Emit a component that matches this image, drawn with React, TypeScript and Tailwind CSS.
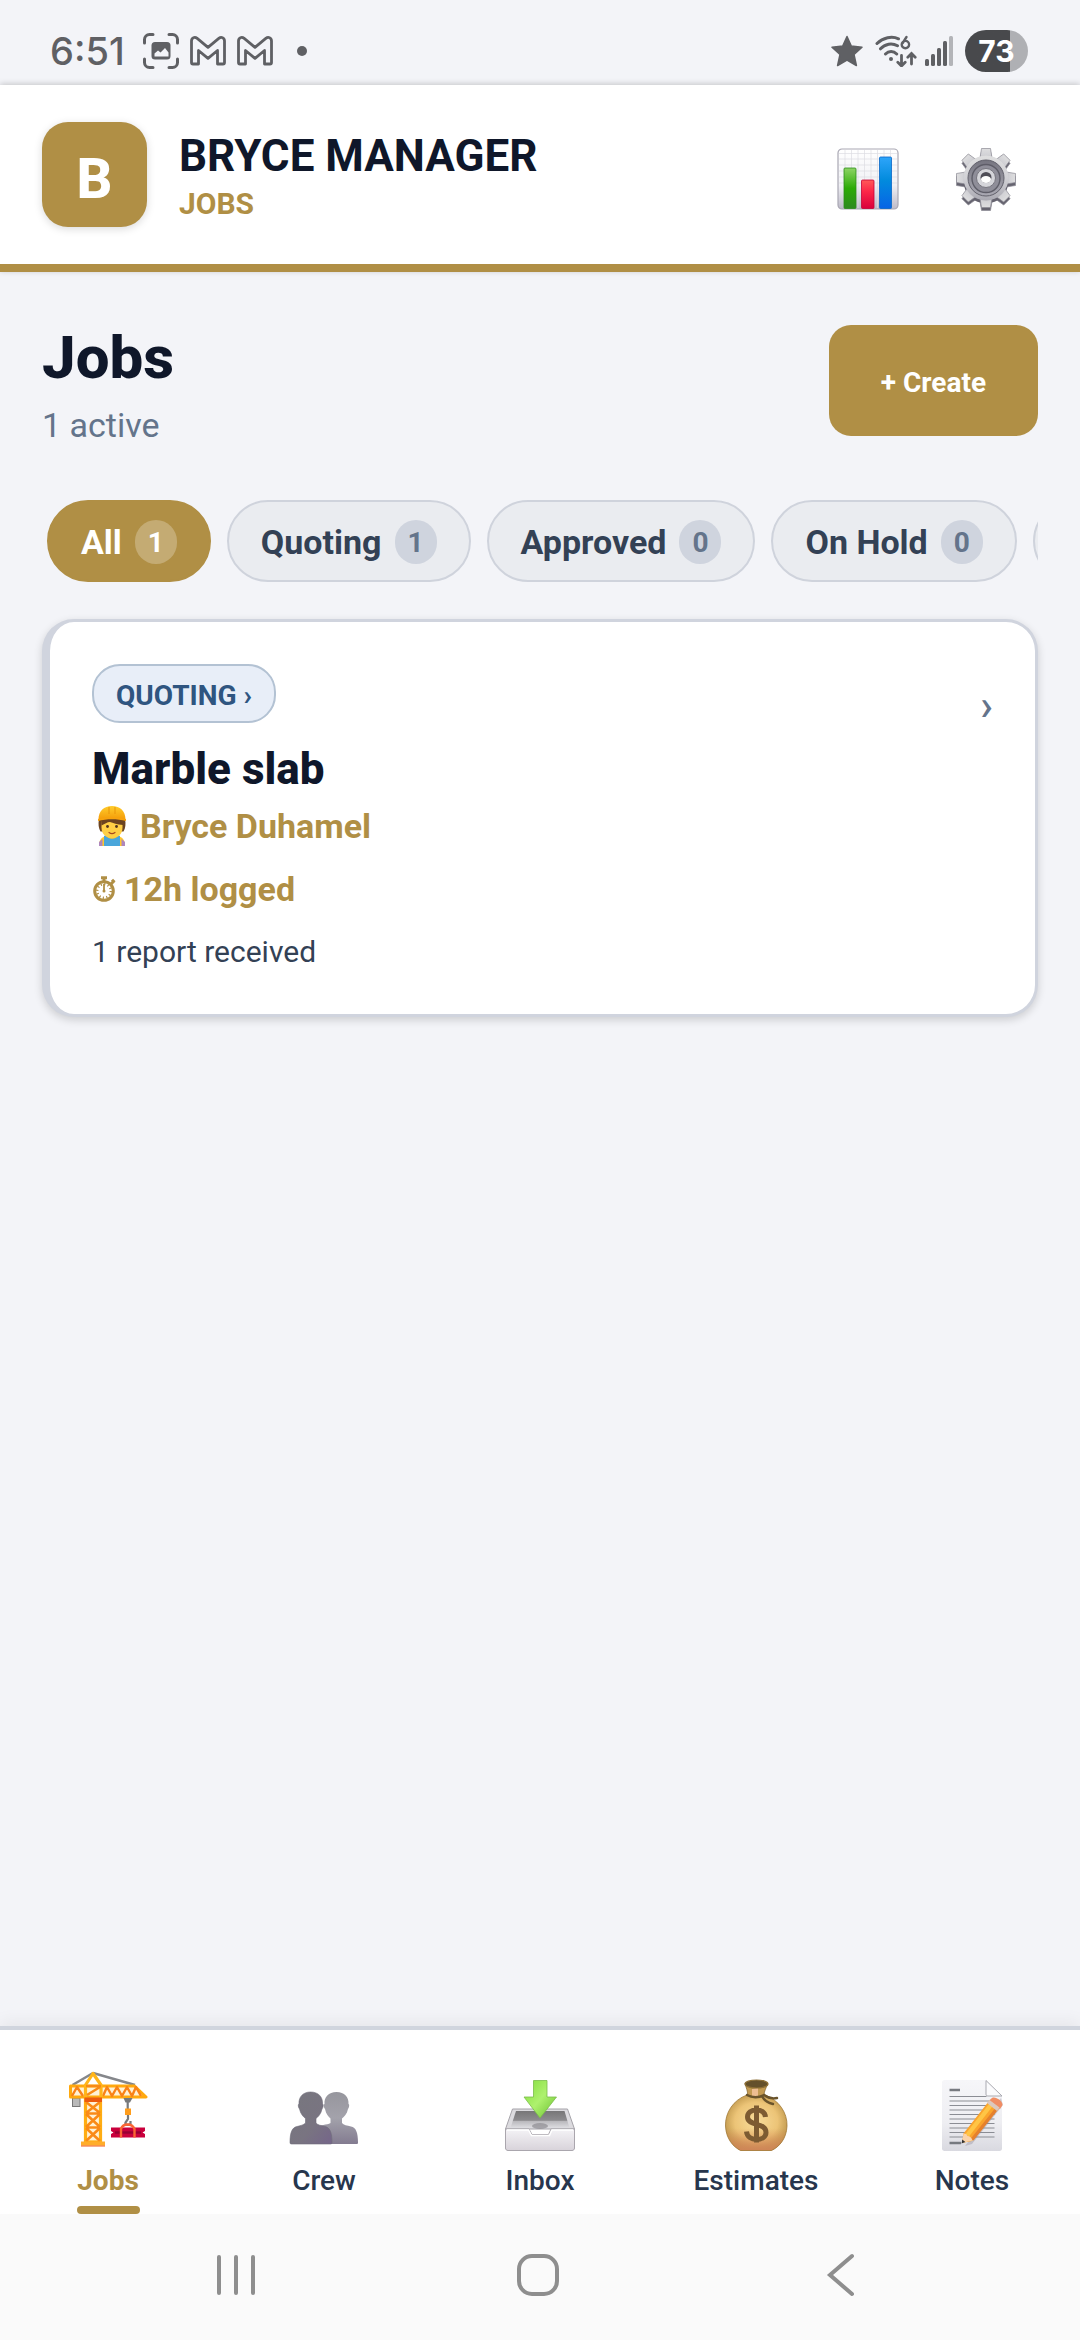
import React from "react";

const filters = [
  { label: "All", count: 1, active: true },
  { label: "Quoting", count: 1, active: false },
  { label: "Approved", count: 0, active: false },
  { label: "On Hold", count: 0, active: false },
];

function CaptureIcon() {
  return (
    <svg className="size-9" viewBox="0 0 36 36" fill="none" aria-hidden="true">
      <path d="M1.5 10V6.5a5 5 0 0 1 5-5H10M26 1.5h3.500a5 5 0 0 1 5 5V10M34.500 26v3.500a5 5 0 0 1-5 5H26M10 34.500H6.500a5 5 0 0 1-5-5V26" stroke="#5f6064" strokeWidth="3" strokeLinecap="round" />
      <rect x="8.500" y="9" width="19" height="17.500" rx="3.500" fill="#5f6064" />
      <path d="M11.500 23.500v-3l3.500-3 2.500 2 4.500-4.500 3.500 4.500v4z" fill="#f3f4f8" />
    </svg>
  );
}

function MailIcon() {
  return (
    <svg className="h-[30px] w-9" viewBox="0 0 36 30" fill="none" stroke="#5f6064" aria-hidden="true">
      <path d="M1.500 26.500V5C1.500 1.500 4.800 .5 7.200 2.400L18 11.300 28.800 2.400C31.200 .5 34.500 1.500 34.500 5v21.500c0 1-.6 1.500-1.500 1.500h-5.500V14.500L18 22.300 8.500 14.500V28H3c-.9 0-1.500-.5-1.500-1.500z" strokeWidth="2.800" strokeLinejoin="round" />
    </svg>
  );
}

function WifiIcon() {
  return (
    <svg className="h-8 w-[42px]" viewBox="0 0 42 32" fill="none" stroke="#5f6064" strokeLinecap="round" aria-hidden="true">
      <path d="M2 8.500C8 2.500 17 .8 23.500 3.800M5.500 13.800C10 8.800 17 7.600 22.500 10.800M10.500 19c3.200-3.200 8-3.200 11.200 0" strokeWidth="3" />
      <circle cx="16" cy="24" r="2" fill="#5f6064" stroke="none" />
      <path d="M31.500 2 27.700 8M26.700 9.600a3.700 3.700 0 1 1 7.400 0 3.700 3.700 0 1 1-7.400 0z" strokeWidth="2.400" />
      <path d="M26.500 20.500V31M22.800 27.300l3.700 3.700 3.700-3.700M36.500 29V18.500M32.800 22.200l3.700-3.700 3.700 3.700" strokeWidth="2.800" />
    </svg>
  );
}

function StatusBar() {
  return (
    <div className="flex h-[85px] items-center justify-between pt-4 pr-[52px] pl-[50px] font-['Inter',sans-serif]">
      <div className="flex items-center">
        <span className="text-[38px] leading-10 font-medium text-[#5f6064]">6:51</span>
        <span className="ml-[18px] flex items-center gap-[11px]">
          <CaptureIcon />
          <MailIcon />
          <MailIcon />
        </span>
        <span className="ml-6 size-[10px] rounded-full bg-[#5f6064]" />
      </div>
      <div className="flex items-center">
        <svg className="size-8" viewBox="0 0 32 32" aria-hidden="true">
          <path d="M16 1.500 20.300 11 31 12.200 23 19.500 25.400 30.500 16 25 6.600 30.500 9 19.500 1 12.200 11.700 11z" fill="#5f6064" stroke="#5f6064" strokeWidth="1.500" strokeLinejoin="round" />
        </svg>
        <span className="ml-3">
          <WifiIcon />
        </span>
        <svg className="ml-2 h-8 w-7" viewBox="0 0 28 32" aria-hidden="true">
          <g fill="#5f6064">
            <rect x="0" y="24" width="4" height="7" rx="1.500" />
            <rect x="6" y="19" width="4" height="12" rx="1.500" />
            <rect x="12" y="13" width="4" height="18" rx="1.500" />
            <rect x="18" y="6" width="4" height="25" rx="1.500" />
          </g>
          <rect x="24" y="1" width="4" height="30" rx="1.500" fill="#b3b4b8" />
        </svg>
        <span className="ml-3 flex h-[42px] w-[63px] items-center justify-center rounded-full bg-linear-to-r from-[#48494c] from-72% to-[#afb0b4] to-72% text-[30px] leading-10 font-bold text-white">
          73
        </span>
      </div>
    </div>
  );
}

function ChartIcon() {
  return (
    <svg className="size-16" viewBox="0 0 64 64" aria-hidden="true">
      <defs>
        <linearGradient id="chart-paper" x1="0" y1="0" x2="0" y2="1">
          <stop offset="0" stopColor="#fff" />
          <stop offset=".6" stopColor="#f1f1f5" />
          <stop offset="1" stopColor="#bdbac8" />
        </linearGradient>
        <linearGradient id="chart-green" x1="0" y1="0" x2="0" y2="1">
          <stop offset="0" stopColor="#8ed465" />
          <stop offset=".5" stopColor="#2cab06" />
          <stop offset="1" stopColor="#2d8a1f" />
        </linearGradient>
        <linearGradient id="chart-red" x1="0" y1="0" x2="0" y2="1">
          <stop offset="0" stopColor="#ff5a58" />
          <stop offset=".4" stopColor="#fc2748" />
          <stop offset="1" stopColor="#d9003c" />
        </linearGradient>
        <linearGradient id="chart-blue" x1="0" y1="0" x2="0" y2="1">
          <stop offset="0" stopColor="#2ea5fa" />
          <stop offset=".45" stopColor="#028bdd" />
          <stop offset="1" stopColor="#0764e6" />
        </linearGradient>
      </defs>
      <rect x="2" y="2" width="60" height="60" rx="4" fill="url(#chart-paper)" stroke="#a9a7b3" strokeWidth="1.200" />
      <path d="M9 3v58M15.500 3v58M22 3v58M28.500 3v58M35 3v58M41.500 3v58M48 3v58M54.500 3v58M3 6.500h58M3 12h58M3 18h58M3 24h58M3 30h58M3 36h58" stroke="#dddce3" strokeWidth=".7" />
      <rect x="8" y="21" width="12" height="40.500" rx="1" fill="url(#chart-green)" stroke="#2b8d1b" strokeWidth=".8" />
      <rect x="25.500" y="33" width="12.500" height="28.500" rx="1" fill="url(#chart-red)" stroke="#c70036" strokeWidth=".8" />
      <rect x="43.500" y="10" width="12" height="51.500" rx="1" fill="url(#chart-blue)" stroke="#0866c6" strokeWidth=".8" />
    </svg>
  );
}

const teeth = [0, 45, 90, 135, 180, 225, 270, 315];

function GearShape({ fill }: { fill: string }) {
  return (
    <g fill={fill} stroke="#8b8993" strokeWidth=".7">
      {teeth.map((angle) => (
        <path key={angle} d="M25.500 14 27.500 1.500h9L38.500 14z" transform={`rotate(${angle} 32 31)`} />
      ))}
      <circle cx="32" cy="31" r="22.500" stroke="none" />
    </g>
  );
}

function GearIcon() {
  return (
    <svg className="size-16" viewBox="0 0 64 64" aria-hidden="true">
      <defs>
        <linearGradient id="gear-face" x1="0" y1="0" x2="0" y2="1">
          <stop offset="0" stopColor="#dededf" />
          <stop offset=".5" stopColor="#d2d2d6" />
          <stop offset="1" stopColor="#a9a8b1" />
        </linearGradient>
        <linearGradient id="gear-ring" x1="0" y1="0" x2="0" y2="1">
          <stop offset="0" stopColor="#75747f" />
          <stop offset="1" stopColor="#aaa9b3" />
        </linearGradient>
      </defs>
      <g transform="translate(0 3)">
        <GearShape fill="#65636f" />
      </g>
      <GearShape fill="url(#gear-face)" />
      <circle cx="32" cy="31" r="18" fill="url(#gear-ring)" stroke="#62616c" />
      <circle cx="32" cy="31.500" r="14" fill="#8f8e99" stroke="#5e5d68" strokeWidth="1.400" />
      <circle cx="32" cy="31" r="9.500" fill="#d5d5da" stroke="#77767f" />
      <circle cx="32" cy="30.500" r="5.500" fill="#4f4e57" />
      <ellipse cx="32" cy="32.500" rx="5" ry="3.400" fill="#fff" />
    </svg>
  );
}

function WorkerIcon() {
  return (
    <svg className="h-10 w-10" viewBox="0 0 40 40" aria-hidden="true">
      <defs>
        <linearGradient id="helmet" x1="0" y1="0" x2="0" y2="1">
          <stop offset="0" stopColor="#ffcd2c" />
          <stop offset="1" stopColor="#f49b08" />
        </linearGradient>
      </defs>
      <path d="M7 13c-1 5-.5 9 1.500 12.500h23C33.500 22 34 18 33 13z" fill="#6b4320" />
      <path d="M7 40c0-6 2.500-9 7-10h12c4.500 1 7 4 7 10z" fill="#ffc72e" />
      <path d="M7 40v-4l3.500-3v7zM33 40v-4l-3.500-3v7z" fill="#ae87bd" />
      <path d="M14 29c1 5 11 5 12 0l2 1v10H12V30z" fill="#4aa6db" />
      <path d="M9.500 15h21v6.500c0 6.500-4.500 10.500-10.500 10.500S9.500 28 9.500 21.500z" fill="#ffcf45" />
      <path d="M9 13h22v6c-6-.3-10-2-13-3-3 0-5 2-8.500 3.500z" fill="#6b4320" />
      <path d="M6.500 13.500C6.500 5 12 0 20 0s13.500 5 13.500 13.500c-9-2-18-2-27 0z" fill="url(#helmet)" />
      <path d="M6 13c9-2.500 19-2.500 28 0v2c-9-2.500-19-2.500-28 0z" fill="#f7a20d" />
      <path d="M17 1v7M23 1v7" stroke="#e99508" strokeWidth="1" />
      <circle cx="15.500" cy="20.500" r="1.400" fill="#51331d" />
      <circle cx="24.500" cy="20.500" r="1.400" fill="#51331d" />
      <path d="M17 26.500c2 1.500 4 1.500 6 0" stroke="#a7481d" strokeWidth="1.200" fill="none" strokeLinecap="round" />
    </svg>
  );
}

function StopwatchIcon() {
  return (
    <svg className="h-[26px] w-6" viewBox="0 0 24 26" fill="none" stroke="#b08f45" aria-hidden="true">
      <circle cx="12" cy="15" r="9.300" strokeWidth="3" />
      <circle cx="12" cy="15" r="6.800" strokeWidth="2.400" strokeDasharray="1.200 2.360" />
      <path d="M9 1.800h6M12 2v4M20 3.800l2.500 2.500M22 5 19 8" strokeWidth="3" />
      <path d="M12 15V8" strokeWidth="1.800" />
      <circle cx="12" cy="15" r="1.500" fill="#b08f45" stroke="none" />
    </svg>
  );
}

function CraneIcon() {
  return (
    <svg className="size-20" viewBox="0 0 80 80" fill="none" aria-hidden="true">
      <path d="M25 2 4.500 14M25 2l42 12" stroke="#85878b" strokeWidth="2.600" />
      <rect x="4.500" y="27" width="7.500" height="8.500" fill="#b9b9b9" stroke="#777" />
      <rect x="17.500" y="28" width="15" height="43" fill="#fff1d4" stroke="#ffad12" strokeWidth="3.200" />
      <path d="m18 31 14 11M32 31 18 42M18 43l14 13M32 43 18 56M18 57l14 13M32 57 18 70M18 42.500h14M18 56.500h14" stroke="#fa8a17" strokeWidth="2.600" />
      <path d="M2.500 15H66.500L78 26H2.500z" fill="#fff1d4" stroke="#ffa90e" strokeWidth="3" strokeLinejoin="round" />
      <path d="m4 25 5-9 6 9M35 25l4-9 5 9 5-9 5 9 5-9 5 9 4-9 5 9" stroke="#f98217" strokeWidth="2.400" strokeLinejoin="round" />
      <path d="M17.500 26.500V14L25 2.500 33 14v12.500" stroke="#ffb51a" strokeWidth="3.200" strokeLinejoin="round" />
      <path d="m19 24 13-8M18 15h15" stroke="#f88a16" strokeWidth="2.600" />
      <rect x="16.500" y="26.500" width="17.500" height="4.500" fill="#ec5a0e" />
      <path d="M13 75v-4.500h24V75z" fill="#ffad2a" />
      <path d="M13 75h24" stroke="#f68a58" strokeWidth="1.400" />
      <path d="M55.500 27h9l-2.500 4.500h-4.500z" fill="#77797c" />
      <path d="M59.700 31v7" stroke="#77797c" strokeWidth="2.200" />
      <rect x="57" y="37.500" width="6" height="6.500" fill="#ff9d1c" />
      <path d="M60 44v4l-2.500 3.500c-.8 2 2 3.500 5 1.500v-3" stroke="#77797c" strokeWidth="2.200" />
      <path d="M43 56.500h34V60l-2.500 1.500L77 63v3.500H43V63l2.500-1.500L43 60z" fill="#c9003c" />
      <path d="M47 61.500h26" stroke="#970033" strokeWidth="2.400" />
      <path d="M53 66.500V58c2-6 11-6 13.500 0v8.500" stroke="#fb6532" strokeWidth="2.400" />
    </svg>
  );
}

function CrewIcon() {
  return (
    <svg className="size-20" viewBox="0 0 80 80" aria-hidden="true">
      <defs>
        <linearGradient id="crew-back" x1="0" y1="0" x2="0" y2="1">
          <stop offset="0" stopColor="#96969d" />
          <stop offset=".5" stopColor="#a3a2ab" />
          <stop offset="1" stopColor="#837b90" />
        </linearGradient>
        <linearGradient id="crew-front" x1="0" y1="0" x2="1" y2="1">
          <stop offset="0" stopColor="#77777e" />
          <stop offset=".6" stopColor="#797481" />
          <stop offset="1" stopColor="#75658a" />
        </linearGradient>
      </defs>
      <path d="M52.500 21c8 0 12.500 5 12 12 1 0 1 3-.5 5-1 5-4 8-6 9.500V52c1.500 2 5 2.500 9 3.500 5 1 7 6 7 16 0 1-.5 1.500-1.500 1.500H31V56c5-2 12-2 15.500-4v-4.500c-2-1.500-4.500-4.500-5.500-9.500-1.500-2-1.500-5-.5-5-.5-7 4-12 12-12z" fill="url(#crew-back)" />
      <path d="M26.500 21c8 0 12.500 5 12 12 1 0 1 3-.5 5-1 5-4 8-6 9.500V52c1.500 2 5 2.500 9 3.500 5 1 7 6 7 16 0 1-.5 1.500-1.500 1.500h-39c-1 0-1.500-.5-1.500-1.500 0-10 2-15 7-16 4-1 6.500-1.500 8.500-3.500v-4.500c-2-1.500-5-4.500-6-9.500-1.500-2-1.500-5-.5-5-.5-7 4-12 11.500-12z" fill="url(#crew-front)" stroke="#6f6c78" strokeWidth=".6" />
    </svg>
  );
}

function InboxIcon() {
  return (
    <svg className="size-20" viewBox="0 0 80 80" aria-hidden="true">
      <defs>
        <linearGradient id="tray-front" x1="0" y1="0" x2="0" y2="1">
          <stop offset="0" stopColor="#f4f3f6" />
          <stop offset="1" stopColor="#d8d3da" />
        </linearGradient>
        <linearGradient id="tray-inside" x1="0" y1="0" x2="0" y2="1">
          <stop offset="0" stopColor="#777678" />
          <stop offset=".55" stopColor="#8d8c8f" />
          <stop offset=".6" stopColor="#b9b8bc" />
          <stop offset="1" stopColor="#dedee2" />
        </linearGradient>
        <linearGradient id="tray-arrow" x1="0" y1="0" x2="1" y2="1">
          <stop offset="0" stopColor="#83dc3d" />
          <stop offset=".5" stopColor="#aef16e" />
          <stop offset="1" stopColor="#67bd2c" />
        </linearGradient>
      </defs>
      <path d="M12.500 38h55L74.500 58H5.500z" fill="#dcdbdf" stroke="#a5a3a9" />
      <path d="M16 40h48.500l5 17h-59z" fill="url(#tray-inside)" />
      <ellipse cx="40" cy="55" rx="8" ry="3" fill="#8d8c91" opacity=".7" />
      <path d="M5.500 58H29l3 5.500h16.500L51 58h23.500v19c0 1.500-1 2.500-2.500 2.500H8c-1.500 0-2.500-1-2.500-2.500z" fill="url(#tray-front)" stroke="#aaa6ad" />
      <path d="M7 59h21.500l3 5.500h18l2.500-5.500h21" fill="none" stroke="#fff" strokeWidth="1.400" />
      <path d="M33.500 9.500h13.500V26h9.500L40 47 24 26h9.500z" fill="url(#tray-arrow)" stroke="#79bd49" strokeWidth=".8" />
    </svg>
  );
}

function MoneyBagIcon() {
  return (
    <svg className="size-20" viewBox="0 0 80 80" aria-hidden="true">
      <defs>
        <radialGradient id="bag" cx=".5" cy=".48" r=".58">
          <stop offset="0" stopColor="#f8dc9a" />
          <stop offset=".6" stopColor="#ecc477" />
          <stop offset="1" stopColor="#b58d42" />
        </radialGradient>
        <linearGradient id="bag-base" x1="0" y1="0" x2="0" y2="1">
          <stop offset=".6" stopColor="#d98c5a" stopOpacity="0" />
          <stop offset="1" stopColor="#cf8557" />
        </linearGradient>
      </defs>
      <path d="M31 24C17 29 9 42 9.500 55c.5 13 8 21 15 24.500h31C63 76 70.500 68 71 55c.5-13-8-26-22-31z" fill="url(#bag)" />
      <path d="M31 24C17 29 9 42 9.500 55c.5 13 8 21 15 24.500h31C63 76 70.500 68 71 55c.5-13-8-26-22-31z" fill="url(#bag-base)" stroke="#a27a36" strokeWidth=".8" />
      <path d="M29 12c1 5 3 8 2.500 12 5 2 12 2 16.500 0 0-4 2.500-7 3.500-12z" fill="#c39a52" stroke="#8b6b31" strokeWidth=".8" />
      <path d="M36 18v7h6v-8z" fill="#edbd91" />
      <ellipse cx="40.500" cy="13" rx="11.500" ry="4" fill="#64502b" stroke="#8d6f36" strokeWidth="1.200" />
      <path d="M31 24c5 3 12 3 17 0 4 3 8 4 13 3M46 25c2 4 6 7 11 8" fill="none" stroke="#6a542c" strokeWidth="2.400" strokeLinecap="round" />
      <path d="M49.500 46c-.5-5-4.500-7-9-7-5 0-9 2.500-9 7 0 9.500 18.500 5 18.500 15.500 0 4.500-4.500 7-9.500 7s-9.500-2.500-10-8M40.500 34.500v37" fill="none" stroke="#7d5b32" strokeWidth="5" />
    </svg>
  );
}

function NotesIcon() {
  return (
    <svg className="size-20" viewBox="0 0 80 80" aria-hidden="true">
      <defs>
        <linearGradient id="sheet" x1="0" y1="0" x2="0" y2="1">
          <stop offset="0" stopColor="#f6f6f9" />
          <stop offset=".6" stopColor="#eeeef2" />
          <stop offset="1" stopColor="#d9d9e0" />
        </linearGradient>
      </defs>
      <path d="M12.500 9H54l16 16v52.500c0 1.500-1 2.500-2.500 2.500h-55c-1.500 0-2.500-1-2.500-2.500v-66C10 10 11 9 12.500 9z" fill="url(#sheet)" />
      <path d="M54 9.500 70 25H56c-1.500 0-2-.5-2-2z" fill="#fbfbfd" stroke="#a9a9b0" />
      <path d="M17.500 19H28M17.500 72H29" stroke="#777a80" strokeWidth="2.400" />
      <path d="M17.500 25.500h37M17.500 30h45M17.500 34.500h45M17.500 39h45M17.500 43.500h45M17.500 48h45M17.500 52.500h45M17.500 57h45M17.500 61.500h45M17.500 66h45" stroke="#8b8d94" strokeWidth="1.200" />
      <path d="m33 75 7-2 31-39-2-7z" fill="#8a8190" opacity=".35" />
      <path d="m30 72 1.500-9.500L57 30l9.500 7.500L40 70z" fill="#fba42c" />
      <path d="m33.500 63 25-32 3.500 2.500-25 32z" fill="#ffc545" />
      <path d="m38.500 68 26-32.500 2.500 2-25.500 32z" fill="#e5812e" />
      <path d="M57 29.500 60 27c3-2 10.500 2.500 10.500 7l-2.500 4z" fill="#f08d64" />
      <path d="m55 32 10 8 2.500-3.500L57.500 29z" fill="#dcc8bd" />
      <path d="m30 72 1.500-9.500c3 0 3.500 1 4 2.500 2.500 0 4 1.500 5 4.500z" fill="#fbd3a9" />
      <path d="m29.500 72.500.8-4 3 2.500z" fill="#333" />
    </svg>
  );
}

const tabs = [
  { label: "Jobs", Icon: CraneIcon, active: true },
  { label: "Crew", Icon: CrewIcon, active: false },
  { label: "Inbox", Icon: InboxIcon, active: false },
  { label: "Estimates", Icon: MoneyBagIcon, active: false },
  { label: "Notes", Icon: NotesIcon, active: false },
];

function Header() {
  return (
    <header className="flex items-center justify-between border-b-8 border-[#b08f45] bg-white px-[42px] py-[37px] shadow-[0_-1px_6px_rgba(0,0,0,0.2)]">
      <div className="flex items-center gap-8">
        <div className="flex size-[105px] items-center justify-center rounded-[26px] bg-[#b08f45] pt-2 text-[56px] leading-none font-extrabold text-white shadow-[0_2px_8px_rgba(0,0,0,0.15)]">
          B
        </div>
        <div className="pt-1">
          <div className="text-[44px] leading-[46px] font-bold text-[#0f172a]">BRYCE MANAGER</div>
          <div className="mt-2 text-[30px] leading-[34px] font-bold text-[#b08f45]">JOBS</div>
        </div>
      </div>
      <div className="flex gap-[13px]">
        <button type="button" aria-label="Reports" className="flex size-[105px] items-center justify-center pt-2">
          <ChartIcon />
        </button>
        <button type="button" aria-label="Settings" className="flex size-[105px] items-center justify-center pt-2">
          <GearIcon />
        </button>
      </div>
    </header>
  );
}

function JobCard() {
  return (
    <article className="mt-[37px] flex items-start justify-between rounded-[32px] border-3 border-l-8 border-[#d0d4de] bg-white p-[42px] shadow-[0_3px_8px_rgba(0,0,0,0.16)]">
      <div>
        <button type="button" className="flex h-[59px] items-center rounded-[28px] border-2 border-[#b3c2d3] bg-[#e8eef8] px-[22px] pt-1 text-[28px] leading-8 font-bold text-[#2f5580]">
          QUOTING ›
        </button>
        <h2 className="mt-4 text-[44px] leading-[60px] font-extrabold text-[#0f172a]">Marble slab</h2>
        <div className="mt-[7px] flex items-center gap-2 text-[34px] leading-10 font-bold text-[#b08f45]">
          <WorkerIcon />
          Bryce Duhamel
        </div>
        <div className="mt-[23px] flex items-center gap-2 text-[34px] leading-10 font-bold text-[#b08f45]">
          <StopwatchIcon />
          12h logged
        </div>
        <p className="mt-[23px] text-[30px] leading-10 text-[#334155]">1 report received</p>
      </div>
      <button type="button" aria-label="Open job" className="mt-[22px] text-[42px] leading-10 font-medium text-[#64748b]">
        ›
      </button>
    </article>
  );
}

export default function App() {
  return (
    <div className="flex min-h-screen flex-col bg-[#f3f4f8] font-['Roboto',sans-serif]">
      <StatusBar />
      <Header />
      <main className="flex-1 px-[42px] pt-[53px]">
        <div className="flex items-start justify-between">
          <div>
            <h1 className="text-[60px] leading-[66px] font-extrabold text-[#0f172a]">Jobs</h1>
            <p className="mt-2.5 text-[34px] leading-[48px] text-[#64748b]">1 active</p>
          </div>
          <button type="button" className="h-[111px] rounded-[22px] bg-[#b08f45] px-[52px] pt-1 text-[28px] font-bold text-white">
            + Create
          </button>
        </div>
        <div className="mt-[51px] flex gap-4 overflow-hidden pl-[5px]">
          {filters.map((f) => (
            <button
              key={f.label}
              type="button"
              aria-pressed={f.active}
              className={
                f.active
                  ? "flex h-[82px] shrink-0 items-center gap-[13px] rounded-full border-2 border-[#b08f45] bg-[#b08f45] px-8 pt-0.5 text-[34px] font-bold text-white"
                  : "flex h-[82px] shrink-0 items-center gap-[13px] rounded-full border-2 border-[#cfd3dc] bg-[#eaecf0] px-8 pt-0.5 text-[34px] font-bold text-[#334155]"
              }
            >
              {f.label}
              <span
                className={
                  f.active
                    ? "flex h-11 w-[42px] items-center justify-center rounded-full bg-white/25 pt-0.5 text-[28px] font-bold text-white"
                    : "flex h-11 w-[42px] items-center justify-center rounded-full bg-[#cfd4de] pt-0.5 text-[28px] font-bold text-[#64748b]"
                }
              >
                {f.count}
              </span>
            </button>
          ))}
          <button
            type="button"
            aria-label="More filters"
            className="h-[82px] w-60 shrink-0 rounded-full border-2 border-[#cfd3dc] bg-[#eaecf0]"
          />
        </div>
        <JobCard />
      </main>
      <nav className="grid grid-cols-5 border-t-4 border-[#d0d5de] bg-white shadow-[0_-4px_16px_rgba(0,0,0,0.06)]">
        {tabs.map(({ label, Icon, active }) => (
          <a
            key={label}
            href={`#${label.toLowerCase()}`}
            className={
              active
                ? "flex flex-col items-center pt-[41px] text-[28px] leading-9 font-bold text-[#b08f45]"
                : "flex flex-col items-center pt-[41px] text-[28px] leading-9 font-medium text-[#27364d]"
            }
          >
            <Icon />
            <span className="mt-3">{label}</span>
            <span className={active ? "mt-[7px] h-2 w-[63px] rounded-full bg-[#b08f45]" : "mt-[7px] h-2"} />
          </a>
        ))}
      </nav>
      <div className="flex h-[126px] items-center justify-between bg-[#fafafa] pr-[218px] pb-1 pl-[214px] text-[#8e8e8e]">
        <button type="button" aria-label="Recent apps">
          <svg className="size-11" viewBox="0 0 44 44" stroke="currentColor" strokeWidth="4" strokeLinecap="round">
            <path d="M5 4v36M22 4v36M39 4v36" />
          </svg>
        </button>
        <button type="button" aria-label="Home">
          <svg className="size-11" viewBox="0 0 44 44" fill="none" stroke="currentColor" strokeWidth="4">
            <rect x="3" y="3" width="38" height="38" rx="13" />
          </svg>
        </button>
        <button type="button" aria-label="Back">
          <svg className="size-11" viewBox="0 0 44 44" fill="none" stroke="currentColor" strokeWidth="4" strokeLinecap="round">
            <path d="M34 3 12 22l22 19" />
          </svg>
        </button>
      </div>
    </div>
  );
}
